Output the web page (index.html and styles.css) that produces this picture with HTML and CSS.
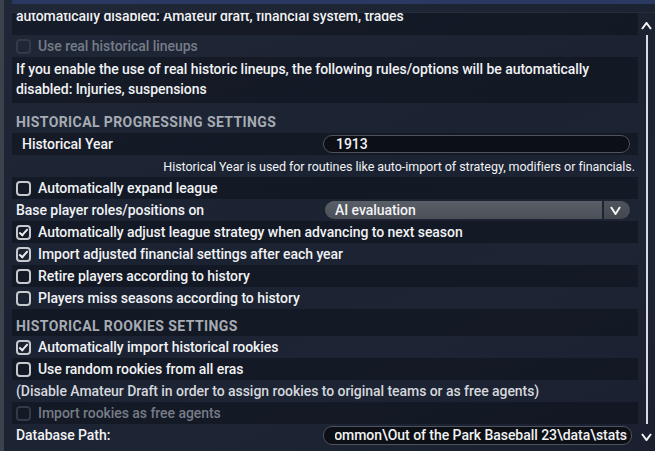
FILE: index.html
```html
<!DOCTYPE html>
<html lang="en">
<head>
    <meta charset="UTF-8">
    <meta name="viewport" content="width=device-width, initial-scale=1.0">
    <title>Historical settings</title>
    <link rel="stylesheet" href="styles.css">
</head>
<body>
    <div class="window">
        <div class="topbar"></div>
        <div class="head"></div>
        <div class="pane">
            <div class="list">
                <!-- tail of the previous option, scrolled half out of view -->
                <div class="row cut">automatically disabled: Amateur draft, financial system, trades</div>
                <div class="row">
                    <span class="check off"></span>
                    <span class="label muted">Use real historical lineups</span>
                </div>
                <div class="row info">If you enable the use of real historic lineups, the following rules/options will be automatically disabled: Injuries, suspensions</div>

                <div class="row section first">HISTORICAL PROGRESSING SETTINGS</div>
                <div class="row">
                    <span class="field-label">Historical Year</span>
                    <div class="field"><span class="value">1913</span></div>
                </div>
                <div class="row hint">Historical Year is used for routines like auto-import of strategy, modifiers or financials.</div>
                <div class="row">
                    <span class="check"></span>
                    <span class="label">Automatically expand league</span>
                </div>
                <div class="row">
                    <span class="plain">Base player roles/positions on</span>
                    <div class="select">
                        <span class="select-value">AI evaluation</span>
                        <span class="select-arrow">
                            <svg width="11" height="9" viewBox="0 0 11 9"><polyline points="1,1 5.5,8 10,1" fill="none" stroke="#f2f2f2" stroke-width="2"/></svg>
                        </span>
                    </div>
                </div>
                <div class="row">
                    <span class="check on"></span>
                    <span class="label">Automatically adjust league strategy when advancing to next season</span>
                </div>
                <div class="row">
                    <span class="check on"></span>
                    <span class="label">Import adjusted financial settings after each year</span>
                </div>
                <div class="row">
                    <span class="check"></span>
                    <span class="label">Retire players according to history</span>
                </div>
                <div class="row">
                    <span class="check"></span>
                    <span class="label">Players miss seasons according to history</span>
                </div>

                <div class="row section">HISTORICAL ROOKIES SETTINGS</div>
                <div class="row">
                    <span class="check on"></span>
                    <span class="label">Automatically import historical rookies</span>
                </div>
                <div class="row">
                    <span class="check"></span>
                    <span class="label">Use random rookies from all eras</span>
                </div>
                <div class="row">
                    <span class="plain note">(Disable Amateur Draft in order to assign rookies to original teams or as free agents)</span>
                </div>
                <div class="row">
                    <span class="check off"></span>
                    <span class="label muted">Import rookies as free agents</span>
                </div>
                <div class="row">
                    <span class="plain">Database Path:</span>
                    <div class="field path"><span class="value">C:\Users\Public\Documents\Common\Out of the Park Baseball 23\data\stats</span></div>
                </div>
            </div>
            <div class="scrollbar">
                <svg class="caret" width="11" height="8" viewBox="0 0 11 8"><polyline points="1,7 5.5,1 10,7" fill="none" stroke="#f4f4f4" stroke-width="2"/></svg>
                <div class="track"></div>
                <svg class="caret" width="11" height="8" viewBox="0 0 11 8"><polyline points="1,1 5.5,7 10,1" fill="none" stroke="#f4f4f4" stroke-width="2"/></svg>
            </div>
        </div>
    </div>
</body>
</html>
```
FILE: styles.css
```css
body {
    margin: 0;
    font-family: Roboto, "Open Sans", sans-serif;
    font-weight: 500;
    font-size: 14px;
    letter-spacing: -0.05px;
    color: #f1f2f4;
    background: linear-gradient(155deg, #202838 0%, #1b2232 45%, #1d2434 70%, #1a2030 100%);
    overflow: hidden;
}
.window {
    height: 100vh;
    display: flex;
    flex-direction: column;
    border-left: 4px solid #3c424c;
    padding-left: 8px;
    box-sizing: border-box;
}
.topbar {
    height: 4px;
    background-color: #2a3961;
}
.head {
    height: 8px;
    border-bottom: 1px solid #262d3b;
}
.pane {
    flex: 1;
    display: flex;
    overflow: hidden;
}
.list {
    flex: 1;
    overflow: hidden;
}
.row {
    height: 22px;
    display: flex;
    align-items: center;
    padding-left: 4px;
    white-space: nowrap;
}
.row:nth-child(odd) {
    background-color: rgba(8, 11, 18, 0.4);
}
.row.cut {
    height: 30px;
    margin-top: -8px;
    align-items: flex-start;
    padding-top: 1px;
    line-height: 20px;
    box-sizing: border-box;
}
.row.info {
    height: auto;
    display: block;
    white-space: normal;
    line-height: 20px;
    padding: 2px 30px 4px 4px;
}
.row.section {
    height: 27px;
    align-items: flex-end;
    font-weight: 700;
    color: #a6abb3;
    line-height: 20px;
    letter-spacing: 0.4px;
}
.row.section.first {
    height: 30px;
    padding-bottom: 1px;
    box-sizing: border-box;
}
.row.hint {
    justify-content: flex-end;
    font-weight: 400;
    font-size: 12.5px;
    padding-right: 3px;
}
.check {
    width: 15px;
    height: 15px;
    box-sizing: border-box;
    border: 2px solid #c6c9ce;
    border-radius: 4px;
    margin-right: 7px;
    flex-shrink: 0;
    display: flex;
    align-items: center;
    justify-content: center;
}
.check.on::after {
    content: "";
    width: 7px;
    height: 3px;
    border-left: 2px solid #eceded;
    border-bottom: 2px solid #eceded;
    transform: translateY(-1px) rotate(-48deg);
}
.check.off {
    border-color: #323947;
}
.muted {
    color: #767c86;
}
.note {
    color: #d4d7dc;
}
.field-label {
    padding-left: 6px;
}
.field {
    margin-left: auto;
    margin-right: 8px;
    width: 307px;
    height: 18px;
    box-sizing: border-box;
    border: 1px solid #4d525b;
    border-radius: 9px;
    background-color: #0c0f15;
    padding: 0 4px 0 12px;
    display: flex;
    align-items: center;
}
.field .value {
    flex: 1;
    overflow: hidden;
    display: flex;
    justify-content: flex-start;
}
.field.path {
    width: 309px;
    margin-right: 6px;
    height: 19px;
    padding-left: 11px;
}
.field.path .value {
    justify-content: flex-end;
}
.select {
    margin-left: auto;
    margin-right: 8px;
    width: 305px;
    height: 18px;
    display: flex;
    border-radius: 9px;
    overflow: hidden;
}
.select-value {
    flex: 1;
    padding-left: 10px;
    display: flex;
    align-items: center;
    background: linear-gradient(#5a5e66, #4b4f57);
}
.select-arrow {
    width: 23px;
    margin-left: 2px;
    display: flex;
    align-items: center;
    justify-content: center;
    padding-right: 3px;
    background: linear-gradient(#4f535b, #43474f);
}
.scrollbar {
    width: 17px;
    display: flex;
    flex-direction: column;
    align-items: center;
    padding: 9px 0 10px;
}
.caret {
    display: block;
}
.track {
    width: 2px;
    flex: 1;
    margin: 5px 0 9px;
    background-color: #d8dadf;
}
```
